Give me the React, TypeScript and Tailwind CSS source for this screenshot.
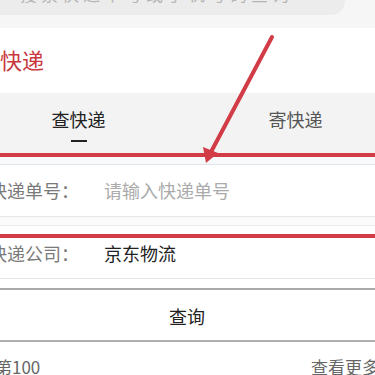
export default function App() {
  return (
    <div
      className="relative w-[375px] h-[375px] overflow-hidden bg-white"
      style={{ fontFamily: '"Noto Sans CJK SC", "Noto Sans", sans-serif' }}
    >
      <div className="-ml-[30px] w-[434px]">
        {/* top search strip */}
        <div className="h-[28px] bg-[#f6f6f6]">
          <div className="w-[375px] h-[15px] bg-[#ececec] rounded-br-[14px] overflow-hidden">
            <div className="-mt-[15px] pl-[50px] text-[17px] leading-[17px] text-[#b5b5b5] tracking-[4px]">
              搜索快递单号或手机号码查询
            </div>
          </div>
        </div>

        {/* title */}
        <div className="h-[65px] flex items-center pl-[8px] pb-[3px]">
          <span className="text-[22px] text-[#c8383e] leading-none">查快递</span>
        </div>

        {/* tabs */}
        <div className="h-[60px] bg-[#f3f3f3] flex">
          <div className="flex-1 flex flex-col items-center pt-[14px]">
            <span className="text-[18px] leading-[24px] text-[#222]">查快递</span>
            <span className="mt-[9px] w-[16px] h-[2px] bg-[#222]" />
          </div>
          <div className="flex-1 flex flex-col items-center pt-[14px]">
            <span className="text-[18px] leading-[24px] text-[#555]">寄快递</span>
          </div>
        </div>

        <div className="h-[12px] bg-[#f8f9fa] border-b border-[#dfe5ea]" />

        {/* number row */}
        <div className="h-[52px] flex items-center border-b border-[#e6e6e6]">
          <span className="w-[134px] pl-[19px] text-[18px] text-[#7a7a7a]">快递单号：</span>
          <span className="text-[18px] text-[#ababab]">请输入快递单号</span>
        </div>
        <div className="h-[9px] bg-[#fafafa] border-b border-[#ececec]" />

        {/* company row */}
        <div className="h-[53px] flex items-center border-b border-[#e8e8e8] pt-[2px]">
          <span className="w-[134px] pl-[19px] text-[18px] text-[#7a7a7a]">快递公司：</span>
          <span className="text-[18px] text-[#222]">京东物流</span>
        </div>
        <div className="h-[11px] bg-white border-b-[2px] border-[#a9a9a9]" />

        {/* query button */}
        <div className="h-[52px] flex items-center justify-center border-b-[2px] border-[#b0b0b0] pt-[3px]">
          <span className="text-[18px] text-[#222]">查询</span>
        </div>

        {/* bottom */}
        <div className="flex items-center justify-between pt-[12px] pr-[25px] text-[17px] text-[#666]">
          <span className="-ml-[26px]">已支持第100</span>
          <span>查看更多</span>
        </div>
      </div>

      {/* red annotation */}
      <svg
        className="absolute inset-0 pointer-events-none"
        width="375"
        height="375"
        viewBox="0 0 375 375"
      >
        <rect x="0" y="153" width="375" height="4" fill="#d23c47" />
        <rect x="0" y="234" width="375" height="4" fill="#d23c47" />
        <line x1="272" y1="37" x2="211" y2="152" stroke="#d23c47" strokeWidth="4" strokeLinecap="round" />
        <polygon points="206,163 203,147 218,153" fill="#d23c47" />
      </svg>
    </div>
  );
}
